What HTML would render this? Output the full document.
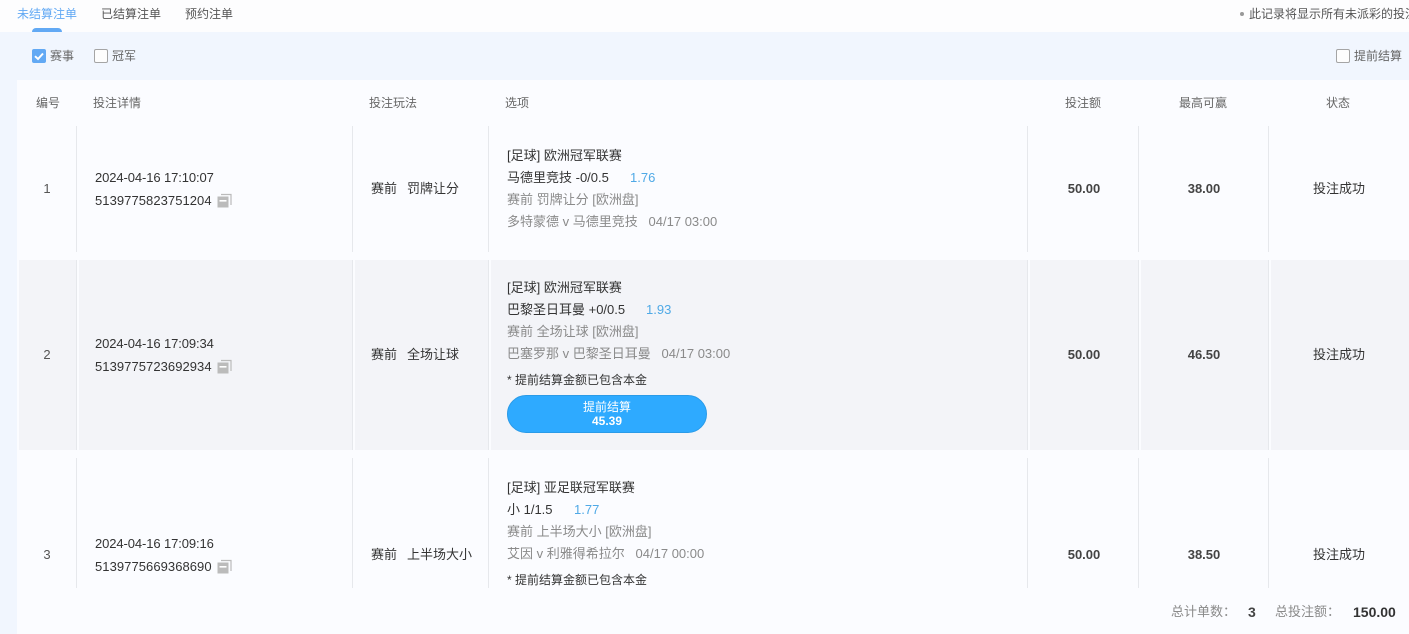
<!DOCTYPE html>
<html><head><meta charset="utf-8">
<style>
html,body{margin:0;padding:0;width:1409px;height:634px;overflow:hidden;background:#f1f6fe}
body{position:relative;font-family:"Liberation Sans","Noto Sans CJK SC",sans-serif;font-size:13px;color:#333}
.a{position:absolute;white-space:nowrap;line-height:18px}
.b{position:absolute}
.g{color:#8a8a8a}
.s{color:#555}
.c{text-align:center;transform:translateX(-50%)}
.h{font-size:12px;color:#666}
.o{color:#4fa9e6}
.v{position:absolute;width:1px;background:#e6e8ec}
.m{font-weight:bold;color:#444;font-size:13px}
.d{letter-spacing:-.1px}
.n{letter-spacing:.06px}
.w{position:absolute;width:15px;height:15px}
.ck{position:absolute;width:12px;height:12px;border:1px solid #a5a5a5;border-radius:2px;background:#fdfdfd}
</style></head><body>

<div class="b" style="left:0;top:0;width:1409px;height:32px;background:#fdfdfe"></div>
<div class="a" style="left:17px;top:5px;font-size:12px;color:#62a9f4">未结算注单</div>
<div class="a s" style="left:101px;top:5px;font-size:12px">已结算注单</div>
<div class="a s" style="left:185px;top:5px;font-size:12px">预约注单</div>
<div class="b" style="left:32px;top:28px;width:30px;height:4px;background:#62a9f4;border-radius:4px 4px 0 0"></div>
<div class="b" style="left:1240px;top:12px;width:4px;height:4px;border-radius:50%;background:#999"></div>
<div class="a s" style="left:1249px;top:5px;font-size:12px">此记录将显示所有未派彩的投注</div>

<div class="b" style="left:32px;top:49px;width:14px;height:14px;background:#62a9f4;border-radius:2px"></div>
<svg class="b" style="left:32px;top:49px" width="14" height="14"><path d="M3 7.2L6 10L11 4.5" fill="none" stroke="#fff" stroke-width="2"/></svg>
<div class="a" style="left:50px;top:47px;font-size:12px;color:#666">赛事</div>
<div class="ck" style="left:94px;top:49px"></div>
<div class="a" style="left:112px;top:47px;font-size:12px;color:#666">冠军</div>
<div class="ck" style="left:1336px;top:49px"></div>
<div class="a" style="left:1354px;top:47px;font-size:12px;color:#666">提前结算</div>

<div class="b" style="left:17px;top:80px;width:1392px;height:554px;background:#fbfcff"></div>
<div class="a h" style="left:36px;top:94px">编号</div>
<div class="a h" style="left:93px;top:94px">投注详情</div>
<div class="a h" style="left:369px;top:94px">投注玩法</div>
<div class="a h" style="left:505px;top:94px">选项</div>
<div class="a h" style="left:1065px;top:94px">投注额</div>
<div class="a h" style="left:1179px;top:94px">最高可赢</div>
<div class="a h" style="left:1326px;top:94px">状态</div>

<div class="b" style="left:19px;top:260px;width:1390px;height:190px;background:#f3f4f8"></div>
<div class="b" style="left:77px;top:260px;width:2px;height:190px;background:#fbfcff"></div>
<div class="b" style="left:353px;top:260px;width:2px;height:190px;background:#fbfcff"></div>
<div class="b" style="left:489px;top:260px;width:2px;height:190px;background:#fbfcff"></div>
<div class="b" style="left:1028px;top:260px;width:2px;height:190px;background:#fbfcff"></div>
<div class="b" style="left:1139px;top:260px;width:2px;height:190px;background:#fbfcff"></div>
<div class="b" style="left:1269px;top:260px;width:2px;height:190px;background:#fbfcff"></div>

<div class="v" style="left:76px;top:126px;height:126px"></div>
<div class="v" style="left:352px;top:126px;height:126px"></div>
<div class="v" style="left:488px;top:126px;height:126px"></div>
<div class="v" style="left:1027px;top:126px;height:126px"></div>
<div class="v" style="left:1138px;top:126px;height:126px"></div>
<div class="v" style="left:1268px;top:126px;height:126px"></div>
<div class="v" style="left:76px;top:260px;height:190px"></div>
<div class="v" style="left:352px;top:260px;height:190px"></div>
<div class="v" style="left:488px;top:260px;height:190px"></div>
<div class="v" style="left:1027px;top:260px;height:190px"></div>
<div class="v" style="left:1138px;top:260px;height:190px"></div>
<div class="v" style="left:1268px;top:260px;height:190px"></div>
<div class="v" style="left:76px;top:458px;height:130px"></div>
<div class="v" style="left:352px;top:458px;height:130px"></div>
<div class="v" style="left:488px;top:458px;height:130px"></div>
<div class="v" style="left:1027px;top:458px;height:130px"></div>
<div class="v" style="left:1138px;top:458px;height:130px"></div>
<div class="v" style="left:1268px;top:458px;height:130px"></div>

<!-- row 1 -->
<div class="a s c" style="left:47px;top:180px">1</div>
<div class="a d" style="left:95px;top:169px">2024-04-16 17:10:07</div>
<div class="a n" style="left:95px;top:192px">5139775823751204</div>
<svg class="w" style="left:217px;top:193px" viewBox="0 0 15 15"><path d="M4 1.5H14V12" fill="none" stroke="#bbb" stroke-width="1.2"/><rect x="0.5" y="3.5" width="11" height="11" fill="#bbb"/><rect x="2.5" y="7" width="7" height="1.6" fill="#fff"/></svg>
<div class="a" style="left:371px;top:180px">赛前</div>
<div class="a" style="left:407px;top:180px">罚牌让分</div>
<div class="a" style="left:507px;top:147px">[足球] 欧洲冠军联赛</div>
<div class="a" style="left:507px;top:169px">马德里竞技 -0/0.5</div>
<div class="a o" style="left:630px;top:169px">1.76</div>
<div class="a g" style="left:507px;top:191px">赛前 罚牌让分 [欧洲盘]</div>
<div class="a g" style="left:507px;top:213px">多特蒙德 v 马德里竞技&nbsp;&nbsp;&nbsp;04/17 03:00</div>
<div class="a m c" style="left:1084px;top:180px">50.00</div>
<div class="a m c" style="left:1204px;top:180px">38.00</div>
<div class="a c" style="left:1339px;top:180px">投注成功</div>

<!-- row 2 -->
<div class="a s c" style="left:47px;top:346px">2</div>
<div class="a d" style="left:95px;top:335px">2024-04-16 17:09:34</div>
<div class="a n" style="left:95px;top:358px">5139775723692934</div>
<svg class="w" style="left:217px;top:359px" viewBox="0 0 15 15"><path d="M4 1.5H14V12" fill="none" stroke="#bbb" stroke-width="1.2"/><rect x="0.5" y="3.5" width="11" height="11" fill="#bbb"/><rect x="2.5" y="7" width="7" height="1.6" fill="#fff"/></svg>
<div class="a" style="left:371px;top:346px">赛前</div>
<div class="a" style="left:407px;top:346px">全场让球</div>
<div class="a" style="left:507px;top:279px">[足球] 欧洲冠军联赛</div>
<div class="a" style="left:507px;top:301px">巴黎圣日耳曼 +0/0.5</div>
<div class="a o" style="left:646px;top:301px">1.93</div>
<div class="a g" style="left:507px;top:323px">赛前 全场让球 [欧洲盘]</div>
<div class="a g" style="left:507px;top:345px">巴塞罗那 v 巴黎圣日耳曼&nbsp;&nbsp;&nbsp;04/17 03:00</div>
<div class="a" style="left:507px;top:371px;font-size:12px">* 提前结算金额已包含本金</div>
<div class="b" style="left:507px;top:395px;width:198px;height:36px;border-radius:19px;background:#2eaaff;border:1px solid #2a9be8"></div>
<div class="a c" style="left:607px;top:400px;font-size:12px;line-height:14px;color:#fff;text-align:center">提前结算<br><b>45.39</b></div>
<div class="a m c" style="left:1084px;top:346px">50.00</div>
<div class="a m c" style="left:1204px;top:346px">46.50</div>
<div class="a c" style="left:1339px;top:346px">投注成功</div>

<!-- row 3 -->
<div class="a s c" style="left:47px;top:546px">3</div>
<div class="a d" style="left:95px;top:535px">2024-04-16 17:09:16</div>
<div class="a n" style="left:95px;top:558px">5139775669368690</div>
<svg class="w" style="left:217px;top:559px" viewBox="0 0 15 15"><path d="M4 1.5H14V12" fill="none" stroke="#bbb" stroke-width="1.2"/><rect x="0.5" y="3.5" width="11" height="11" fill="#bbb"/><rect x="2.5" y="7" width="7" height="1.6" fill="#fff"/></svg>
<div class="a" style="left:371px;top:546px">赛前</div>
<div class="a" style="left:407px;top:546px">上半场大小</div>
<div class="a" style="left:507px;top:479px">[足球] 亚足联冠军联赛</div>
<div class="a" style="left:507px;top:501px">小 1/1.5</div>
<div class="a o" style="left:574px;top:501px">1.77</div>
<div class="a g" style="left:507px;top:523px">赛前 上半场大小 [欧洲盘]</div>
<div class="a g" style="left:507px;top:545px">艾因 v 利雅得希拉尔&nbsp;&nbsp;&nbsp;04/17 00:00</div>
<div class="a" style="left:507px;top:571px;font-size:12px">* 提前结算金额已包含本金</div>
<div class="a m c" style="left:1084px;top:546px">50.00</div>
<div class="a m c" style="left:1204px;top:546px">38.50</div>
<div class="a c" style="left:1339px;top:546px">投注成功</div>

<!-- footer -->
<div class="a g" style="left:1171px;top:603px">总计单数：</div>
<div class="a" style="left:1248px;top:603px;font-size:14px;font-weight:bold;color:#444">3</div>
<div class="a g" style="left:1275px;top:603px">总投注额：</div>
<div class="a" style="left:1353px;top:603px;font-size:14px;font-weight:bold;color:#333">150.00</div>
</body></html>
